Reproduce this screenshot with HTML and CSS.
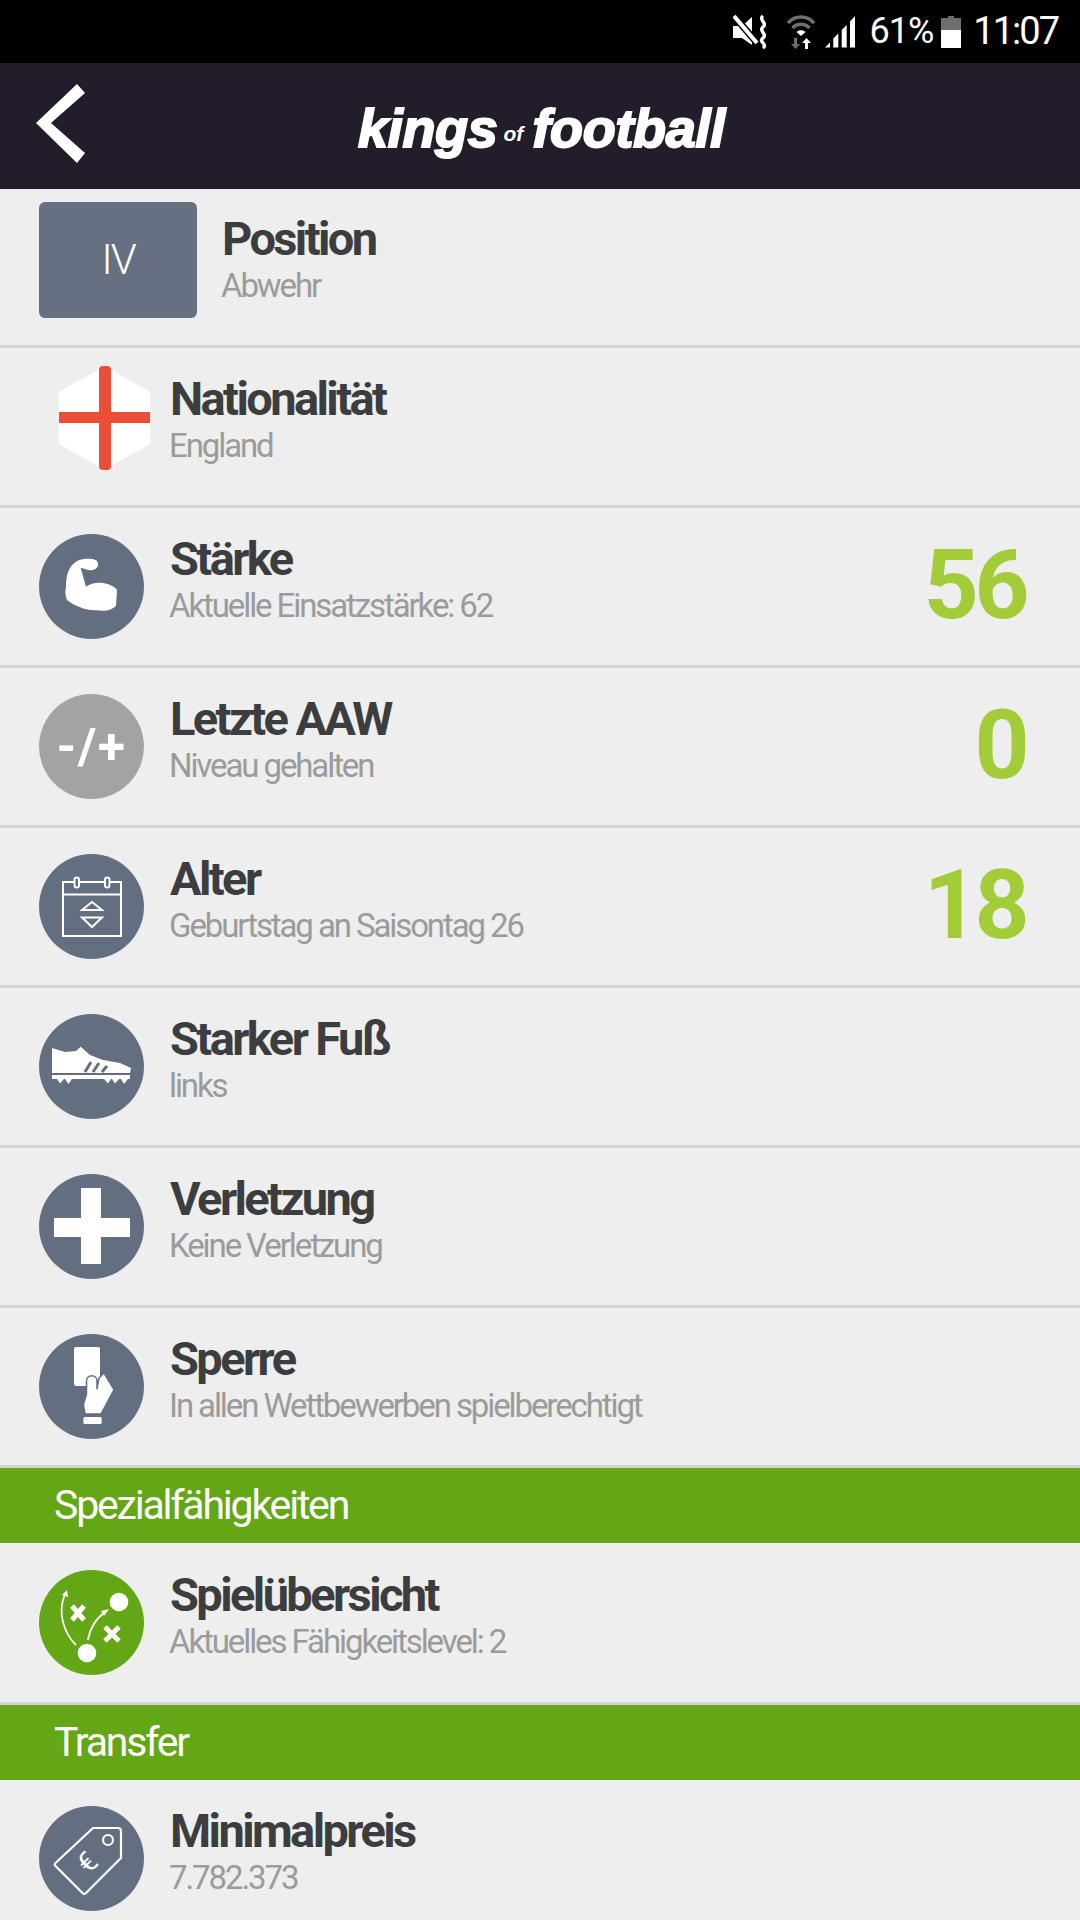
FILE: index.html
```html
<!DOCTYPE html>
<html lang="de">
<head>
    <meta charset="UTF-8">
    <meta name="viewport" content="width=device-width, initial-scale=1.0">
    <title>Kings of Football</title>
    <link rel="stylesheet" href="styles.css">
</head>
<body>
    <div class="status-bar">
        <svg class="icon-mute" width="36" height="34" viewBox="0 0 36 34">
            <path d="M0 11H9L19 2V30L9 23H0Z" fill="#fff"/>
            <path d="M1 1L25 29" stroke="#000" stroke-width="7"/>
            <path d="M1 1L24 28" stroke="#fff" stroke-width="4"/>
            <path d="M30 1C25 5 35 8 30 12C25 16 35 19 30 23C25 27 35 29 30 33" fill="none" stroke="#fff" stroke-width="3.500"/>
        </svg>
        <svg class="icon-wifi" width="28" height="34" viewBox="0 0 28 34">
            <path d="M1 8C8 0 20 0 27 8" fill="none" stroke="#6e6e6e" stroke-width="3.500"/>
            <path d="M5.500 13C10 8 18 8 22.500 13" fill="none" stroke="#6e6e6e" stroke-width="3.500"/>
            <path d="M9.500 17C12 14.500 16 14.500 18.500 17L14 21Z" fill="#fff"/>
            <path d="M7 23H10V29H13L8.500 34L4 29H7Z" fill="#6e6e6e"/>
            <path d="M18 34V28H15L19.500 23L24 28H21V34Z" fill="#fff"/>
        </svg>
        <svg class="icon-signal" width="32" height="32" viewBox="0 0 32 32">
            <path d="M0 31.500L5 26.500V31.500Z" fill="#fff"/>
            <path d="M8.300 31.500V22.500L13.300 17.500V31.500Z" fill="#fff"/>
            <path d="M16.700 31.500V14L21.700 9V31.500Z" fill="#fff"/>
            <path d="M25 31.500V5.500L30 0V31.500Z" fill="#fff"/>
        </svg>
        <span class="status-text percent">61%</span>
        <svg class="icon-battery" width="20" height="32" viewBox="0 0 20 32">
            <path d="M7 0H13V2H20V14H0V2H7Z" fill="#6e6e6e"/>
            <rect y="14" width="20" height="18" fill="#fff"/>
        </svg>
        <span class="status-text clock">11:07</span>
    </div>

    <header class="top-bar">
        <svg class="back" width="50" height="80" viewBox="0 0 50 80">
            <path d="M41 0L49 9L15 39L49 69L41 79L0 39Z" fill="#fff"/>
        </svg>
        <div class="logo">kings<span class="logo-of">of</span>football</div>
    </header>

    <main class="list">
        <div class="row row-first">
            <div class="position-box">IV</div>
            <div class="info">
                <div class="title">Position</div>
                <div class="sub">Abwehr</div>
            </div>
        </div>

        <div class="row">
            <svg class="flag" width="91" height="104" viewBox="0 0 91 104">
                <path d="M45.500 0L91 26V78L45.500 104L0 78V26Z" fill="#fff"/>
                <rect x="40" y="0" width="12" height="104" rx="4" fill="#ec4d37"/>
                <rect x="0" y="46" width="91" height="11" fill="#ec4d37"/>
            </svg>
            <div class="info">
                <div class="title">Nationalität</div>
                <div class="sub">England</div>
            </div>
        </div>

        <div class="row">
            <div class="badge">
                <svg width="105" height="105" viewBox="0 0 105 105">
                    <path d="M40 26C48 24 58 24 59 29C60 34 55 37 50 36C46 35.500 44 34 41.700 34L47 52.700C52 49 58 48 64 49C70 50 75 52 78 56L77 72C72 76 68 77 64 76.700C56 76.500 48 76 43 74C37 72 32 69 28 66C26 60 26 57 27 53C27 45 28 40 30 36C32 31 36 28 40 26Z" fill="#fff"/>
                </svg>
            </div>
            <div class="info">
                <div class="title">Stärke</div>
                <div class="sub">Aktuelle Einsatzstärke: 62</div>
            </div>
            <div class="value">56</div>
        </div>

        <div class="row">
            <div class="badge badge-grey"><span class="badge-text">-/+</span></div>
            <div class="info">
                <div class="title">Letzte AAW</div>
                <div class="sub">Niveau gehalten</div>
            </div>
            <div class="value">0</div>
        </div>

        <div class="row">
            <div class="badge">
                <svg width="105" height="105" viewBox="0 0 105 105" fill="none" stroke="#fff" stroke-width="2">
                    <path d="M35 28H24V82H82V28H71M40 28H66"/>
                    <path d="M24 40.500H82"/>
                    <rect x="35.500" y="23.500" width="4.500" height="10" rx="2.200"/>
                    <rect x="66" y="23.500" width="4.500" height="10" rx="2.200"/>
                    <path d="M43 56L53 48L63 56Z"/>
                    <path d="M43 63.500H63L53 73Z"/>
                </svg>
            </div>
            <div class="info">
                <div class="title">Alter</div>
                <div class="sub">Geburtstag an Saisontag 26</div>
            </div>
            <div class="value">18</div>
        </div>

        <div class="row">
            <div class="badge">
                <svg width="105" height="105" viewBox="0 0 105 105">
                    <path d="M13 34L26 38L37 37L41.600 32.700L51 41L64 46L81 49L92 54L91 59H13Z" fill="#fff"/>
                    <path d="M46 58L52 48M54 58L60 49M63 58L68 52" stroke="#636e81" stroke-width="3"/>
                    <path d="M13 61H91V65H13Z" fill="#fff"/>
                    <path d="M18 65H25L21 69.500ZM26 65H33L29.500 70ZM65 65H72L69 69.500ZM73 65H80L76 69.500ZM82 65H89L85 70Z" fill="#fff"/>
                </svg>
            </div>
            <div class="info">
                <div class="title">Starker Fuß</div>
                <div class="sub">links</div>
            </div>
        </div>

        <div class="row">
            <div class="badge">
                <svg width="105" height="105" viewBox="0 0 105 105">
                    <path d="M42 14H62V44H91V63H62V90H42V63H15V44H42Z" fill="#fff"/>
                </svg>
            </div>
            <div class="info">
                <div class="title">Verletzung</div>
                <div class="sub">Keine Verletzung</div>
            </div>
        </div>

        <div class="row">
            <div class="badge">
                <svg width="105" height="105" viewBox="0 0 105 105">
                    <rect x="35" y="13" width="26" height="39" rx="2" fill="#fff"/>
                    <path d="M47.500 60V47C47.500 40 58 40 58 47V55L60 44L65 39L75 55.700L62 80H46L44.400 70.700Z" fill="#fff" stroke="#636e81" stroke-width="1.500"/>
                    <rect x="44.400" y="83" width="18.300" height="7" rx="1.500" fill="#fff"/>
                </svg>
            </div>
            <div class="info">
                <div class="title">Sperre</div>
                <div class="sub">In allen Wettbewerben spielberechtigt</div>
            </div>
        </div>

        <div class="section">Spezialfähigkeiten</div>

        <div class="row row-tall">
            <div class="badge badge-green">
                <svg width="105" height="105" viewBox="0 0 105 105" fill="none" stroke="#fff">
                    <circle cx="80" cy="32" r="9.300" fill="#fff" stroke="none"/>
                    <circle cx="48" cy="83" r="9.300" fill="#fff" stroke="none"/>
                    <path d="M33 36L45 50M45 36L33 50" stroke-width="5"/>
                    <path d="M66 57L80 71M80 57L66 71" stroke-width="5"/>
                    <path d="M37 75C25 63 18 43 26 24" stroke-width="1.800"/>
                    <path d="M49 70C51 57 59 47 67 41" stroke-width="1.800"/>
                    <path d="M28 20L29 27L23 25Z" fill="#fff" stroke="none"/>
                    <path d="M70 39L65 46L62 41Z" fill="#fff" stroke="none"/>
                </svg>
            </div>
            <div class="info">
                <div class="title">Spielübersicht</div>
                <div class="sub">Aktuelles Fähigkeitslevel: 2</div>
            </div>
        </div>

        <div class="section">Transfer</div>

        <div class="row">
            <div class="badge">
                <svg width="105" height="105" viewBox="0 0 105 105" fill="none" stroke="#fff" stroke-width="2.200">
                    <path d="M54 22H79C81 22 82 23 82 25V52L47 87C46 88 44.500 88 43.500 87L16.500 60C15.500 59 15.500 58 16.500 57Z" stroke-linejoin="round"/>
                    <circle cx="69" cy="34" r="5"/>
                    <text class="tag-euro" x="48" y="66" transform="rotate(-45 48 56)">€</text>
                </svg>
            </div>
            <div class="info">
                <div class="title">Minimalpreis</div>
                <div class="sub">7.782.373</div>
            </div>
        </div>
    </main>
</body>
</html>
```

FILE: styles.css
```css
html, body {
    margin: 0;
    height: 1920px;
    overflow: hidden;
}

body {
    font-family: Roboto, 'Noto Sans', sans-serif;
    background-color: #eeeeee;
    color: #3c3d3f;
}

.status-bar {
    height: 63px;
    background-color: #000;
    color: #fff;
    display: flex;
    align-items: center;
    justify-content: flex-end;
    padding-right: 22px;
}

.status-bar svg {
    flex: none;
}

.icon-mute {
    margin-right: 18px;
}

.icon-wifi {
    margin-right: 10px;
}

.icon-signal {
    margin-right: 13px;
}

.status-text {
    font-size: 36px;
    line-height: 63px;
    letter-spacing: -1px;
}

.percent {
    margin-right: 8px;
}

.clock {
    margin-left: 12px;
    font-size: 38px;
    letter-spacing: -2px;
}

.top-bar {
    height: 126px;
    background-color: #231c2b;
    position: relative;
}

.back {
    position: absolute;
    left: 36px;
    top: 21px;
}

.logo {
    position: absolute;
    left: 358px;
    top: 33px;
    font-family: 'Liberation Sans', Arial, sans-serif;
    font-weight: bold;
    font-style: italic;
    font-size: 54px;
    line-height: 64px;
    letter-spacing: -0.300px;
    color: #fff;
    -webkit-text-stroke: 2px #fff;
    white-space: nowrap;
}

.logo-of {
    font-size: 21px;
    letter-spacing: 0;
    -webkit-text-stroke: 0;
    margin: 0 9px 0 6px;
    vertical-align: 6px;
}

.row {
    height: 157px;
    border-bottom: 3px solid #d3d3d3;
    display: flex;
    align-items: center;
    padding-left: 39px;
    padding-right: 55px;
}

.row-first {
    height: 156px;
    align-items: flex-start;
}

.row-tall {
    height: 159px;
}

.position-box {
    width: 158px;
    height: 116px;
    margin-top: 13px;
    margin-right: 25px;
    background-color: #667082;
    border-radius: 6px;
    color: #fff;
    font-size: 42px;
    font-weight: 300;
    line-height: 116px;
    letter-spacing: -2px;
    text-align: center;
}

.row-first .info {
    margin-top: 24px;
}

.badge {
    width: 105px;
    height: 105px;
    flex: none;
    border-radius: 50%;
    background-color: #636e81;
    margin-right: 26px;
    display: flex;
    align-items: center;
    justify-content: center;
}

.badge-grey {
    background-color: #a3a3a3;
}

.badge-green {
    background-color: #63a616;
}

.badge-text {
    color: #fff;
    font-size: 50px;
    font-weight: bold;
    letter-spacing: 1.500px;
}

.flag {
    flex: none;
    margin-left: 20px;
    margin-right: 20px;
    margin-bottom: 17px;
}

.tag-euro {
    font-family: Roboto, sans-serif;
    font-size: 28px;
    fill: #fff;
    stroke: none;
    text-anchor: middle;
}

.info {
    flex: 1;
    margin-top: -14px;
}

.title {
    font-size: 47px;
    font-weight: bold;
    line-height: 52px;
    letter-spacing: -2.600px;
}

.sub {
    font-size: 33px;
    line-height: 42px;
    letter-spacing: -2.100px;
    margin-left: -1px;
    color: #9b9b9b;
}

.value {
    font-size: 96px;
    font-weight: bold;
    line-height: 96px;
    letter-spacing: -4.500px;
    color: #a3cc39;
    margin-top: -3px;
}

.section {
    height: 75px;
    background-color: #63a616;
    color: #fff;
    font-size: 41px;
    line-height: 75px;
    letter-spacing: -2.200px;
    padding-left: 54px;
}
```
